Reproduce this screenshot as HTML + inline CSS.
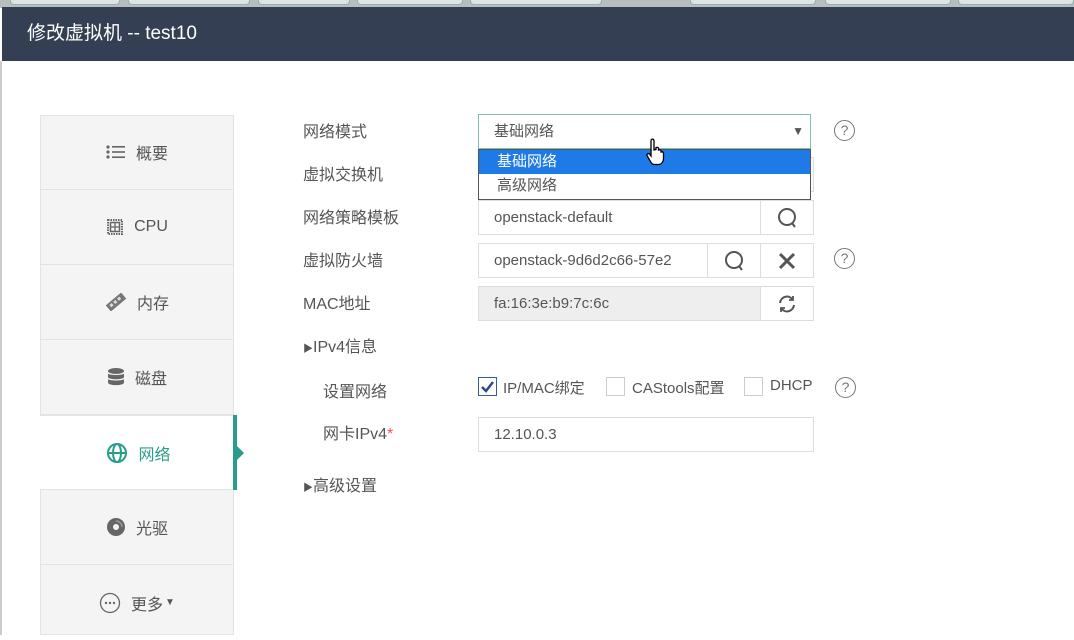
<!DOCTYPE html>
<html><head><meta charset="utf-8"><style>
*{box-sizing:border-box;margin:0;padding:0}
body{width:1074px;height:635px;overflow:hidden;background:#fff;font-family:"Liberation Sans","Noto Sans CJK SC",sans-serif;font-size:15px;color:#555;position:relative}
.a{position:absolute}
.top{left:0;top:0;width:1074px;height:8px;background:#b9bdbd}
.tab{top:0;height:5px;background:#dfe3e3;border:1px solid #8fb5ad;border-top:none;border-radius:0 0 4px 4px}
.hdr{left:2px;top:7px;width:1072px;height:54px;background:#343f54;color:#fff;font-size:19px;line-height:54px;padding-left:25px}
.side{left:40px;top:115px;width:194px;height:520px;background:#f4f4f4;border:1px solid #e3e3e3}
.it{left:40px;width:194px;height:75px;border-bottom:1px solid #e3e3e3;display:flex;align-items:center;justify-content:center;font-size:16px;color:#555}
.it svg{margin-right:10px}
.lbl{left:303px;font-size:16px;color:#555}
.box{border:1px solid #ddd;background:#fff;height:35px;line-height:33px;padding-left:15px;font-size:15px;color:#555}
.btn{border:1px solid #ddd;background:#fff;height:35px;display:flex;align-items:center;justify-content:center}
.q{width:21px;height:21px;border:1.3px solid #777;border-radius:50%;font-size:14px;text-align:center;line-height:18px;color:#777}
.cb{width:19px;height:19px;border:1px solid #ccc;background:#fff}
</style></head><body>
<div class="a top"></div>
<div class="a tab" style="left:10px;width:110px"></div>
<div class="a tab" style="left:128px;width:122px"></div>
<div class="a tab" style="left:258px;width:92px"></div>
<div class="a tab" style="left:357px;width:106px"></div>
<div class="a tab" style="left:470px;width:132px"></div>
<div class="a tab" style="left:690px;width:126px"></div>
<div class="a tab" style="left:825px;width:126px"></div>
<div class="a tab" style="left:958px;width:116px"></div>
<div class="a hdr">修改虚拟机 -- test10</div>
<div class="a" style="left:0;top:61px;width:2px;height:574px;background:#ccc"></div>

<div class="a side"></div>
<div class="a it" style="top:115px"><svg width="20" height="16" viewBox="0 0 20 16"><g fill="#666"><circle cx="2" cy="3" r="1.6"/><circle cx="2" cy="8" r="1.6"/><circle cx="2" cy="13" r="1.6"/><rect x="6" y="2" width="13" height="1.6"/><rect x="6" y="7.2" width="13" height="1.6"/><rect x="6" y="12.4" width="13" height="1.6"/></g></svg>概要</div>
<div class="a it" style="top:190px"><svg width="18" height="18" viewBox="0 0 18 18"><rect x="2" y="2" width="14" height="14" fill="none" stroke="#666" stroke-width="2" stroke-dasharray="1.5 1"/><rect x="4.5" y="4.5" width="9" height="9" fill="none" stroke="#666" stroke-width="1.5"/><path d="M9 4.5v9M4.5 9h9" stroke="#666" stroke-width="1.3"/></svg>CPU</div>
<div class="a it" style="top:265px"><svg width="22" height="18" viewBox="0 0 22 18"><g transform="rotate(-40 11 9)"><rect x="1" y="5" width="20" height="8" fill="#777"/><rect x="4" y="7" width="3" height="3" fill="#ddd"/><rect x="9" y="7" width="3" height="3" fill="#ddd"/><rect x="14" y="7" width="3" height="3" fill="#ddd"/></g></svg>内存</div>
<div class="a it" style="top:340px"><svg width="18" height="20" viewBox="0 0 18 20"><g fill="#666"><ellipse cx="9" cy="4" rx="8" ry="3"/><path d="M1 6.5c0 2 16 2 16 0v3.5c0 3-16 3-16 0z"/><path d="M1 12c0 2 16 2 16 0v3.5c0 3.5-16 3.5-16 0z"/></g></svg>磁盘</div>
<div class="a it" style="top:415px;left:40px;width:197px;background:#fff;color:#2a9d8a;border-top:1px solid #e3e3e3"><svg width="22" height="22" viewBox="0 0 22 22" fill="none" stroke="#2a9d8a" stroke-width="2"><circle cx="11" cy="11" r="9"/><ellipse cx="11" cy="11" rx="4" ry="9"/><path d="M2 11h18"/></svg>网络</div>
<div class="a" style="left:233px;top:415px;width:4px;height:75px;background:#2a9d8a"></div>
<div class="a" style="left:237px;top:446px;width:0;height:0;border-top:7px solid transparent;border-bottom:7px solid transparent;border-left:7px solid #2a9d8a"></div>
<div class="a it" style="top:490px"><svg width="20" height="20" viewBox="0 0 20 20"><circle cx="10" cy="10" r="9" fill="#666"/><circle cx="10" cy="10" r="3" fill="#f4f4f4"/><path d="M10 4a6 6 0 0 1 6 6" stroke="#999" stroke-width="1.5" fill="none"/></svg>光驱</div>
<div class="a it" style="top:565px;border-bottom:none"><svg width="22" height="22" viewBox="0 0 22 22"><circle cx="11" cy="11" r="9.5" fill="none" stroke="#666" stroke-width="1.3"/><g fill="#666"><circle cx="7" cy="11" r="1.2"/><circle cx="11" cy="11" r="1.2"/><circle cx="15" cy="11" r="1.2"/></g></svg>更多<span style="font-size:10px;margin-left:2px">▼</span></div>

<div class="a lbl" style="top:118px">网络模式</div>
<div class="a lbl" style="top:161px">虚拟交换机</div>
<div class="a lbl" style="top:204px">网络策略模板</div>
<div class="a lbl" style="top:247px">虚拟防火墙</div>
<div class="a lbl" style="top:290px">MAC地址</div>
<div class="a lbl" style="top:333px"><span style="font-size:10px">▶</span>IPv4信息</div>
<div class="a lbl" style="top:378px;left:323px">设置网络</div>
<div class="a lbl" style="top:420px;left:323px">网卡IPv4<span style="color:#e55">*</span></div>
<div class="a lbl" style="top:472px"><span style="font-size:10px">▶</span>高级设置</div>

<div class="a box" style="left:478px;top:157px;width:336px;background:#fafafa"></div>
<div class="a box" style="left:478px;top:114px;width:333px;border-color:#7fc0b4">基础网络<span style="position:absolute;right:6px;top:0;font-size:12px;color:#555">▼</span></div>
<div class="a" style="left:478px;top:149px;width:333px;height:51px;border:1px solid #555;background:#fff;font-size:15px;line-height:24px">
<div style="background:#1e7ae6;color:#fff;padding-left:18px">基础网络</div>
<div style="padding-left:18px;color:#555">高级网络</div></div>
<svg class="a" style="left:646px;top:137px" width="24" height="30" viewBox="0 0 24 30"><path d="M6 2c1.5 0 2 1 2 2v9l2-0.5v-2c1.5-0.5 2.5 0 2.5 1v1.5c1.5-0.5 2.5 0 2.5 1v1c1.5-0.5 2.5 0 2.5 1.5v5c0 3-2 6-5 6h-4c-2 0-3-1-4-3l-3.5-6c-0.5-1.5 1-2.5 2.5-1.5l1.5 2V4c0-1 0.5-2 1.5-2z" fill="#fff" stroke="#000" stroke-width="1.3"/></svg>

<div class="a box" style="left:478px;top:200px;width:283px">openstack-default</div>
<div class="a btn" style="left:760px;top:200px;width:54px"><svg width="22" height="22" viewBox="0 0 22 22" fill="none" stroke="#555" stroke-width="2"><circle cx="11" cy="10" r="8"/><path d="M16 16l3 4"/></svg></div>
<div class="a box" style="left:478px;top:243px;width:230px;overflow:hidden;white-space:nowrap">openstack-9d6d2c66-57e2</div>
<div class="a btn" style="left:707px;top:243px;width:54px"><svg width="22" height="22" viewBox="0 0 22 22" fill="none" stroke="#555" stroke-width="2"><circle cx="11" cy="10" r="8"/><path d="M16 16l3 4"/></svg></div>
<div class="a btn" style="left:760px;top:243px;width:54px"><svg width="18" height="18" viewBox="0 0 18 18" stroke="#555" stroke-width="3"><path d="M2 2l14 14M16 2L2 16"/></svg></div>
<div class="a box" style="left:478px;top:286px;width:283px;background:#eee">fa:16:3e:b9:7c:6c</div>
<div class="a btn" style="left:760px;top:286px;width:54px"><svg width="20" height="20" viewBox="0 0 20 20" fill="none" stroke="#555" stroke-width="2"><path d="M3 9a7 7 0 0 1 13-3M17 11a7 7 0 0 1-13 3"/><path d="M16 2v4h-4M4 18v-4h4" stroke-width="1.8"/></svg></div>

<div class="a q" style="left:834px;top:120px">?</div>
<div class="a q" style="left:834px;top:248px">?</div>
<div class="a q" style="left:835px;top:377px">?</div>

<div class="a cb" style="left:478px;top:377px;border-color:#3a5a9a"><svg width="17" height="17" viewBox="0 0 17 17"><path d="M3 9l4 4 7-9" fill="none" stroke="#2a4a8a" stroke-width="2.5"/></svg></div>
<div class="a" style="left:503px;top:377px;font-size:15px">IP/MAC绑定</div>
<div class="a cb" style="left:606px;top:377px"></div>
<div class="a" style="left:632px;top:377px;font-size:15px">CAStools配置</div>
<div class="a cb" style="left:744px;top:377px"></div>
<div class="a" style="left:770px;top:377px;font-size:15px">DHCP</div>
<div class="a box" style="left:478px;top:417px;width:336px">12.10.0.3</div>
</body></html>
